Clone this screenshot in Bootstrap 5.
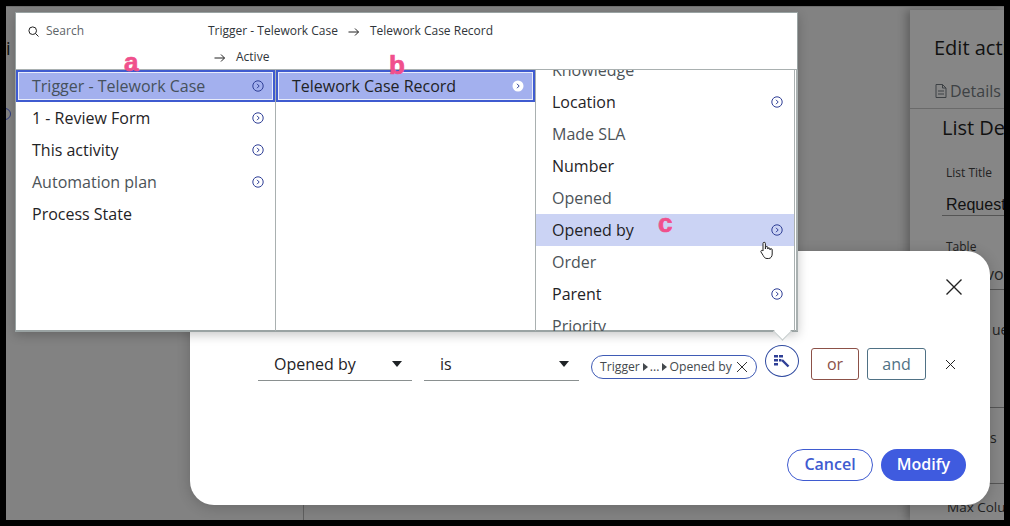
<!DOCTYPE html>
<html lang="en">
<head>
    <meta charset="UTF-8">
    <meta name="viewport" content="width=device-width, initial-scale=1.0">
    <title>Condition builder</title>
    <link href="https://cdn.jsdelivr.net/npm/bootstrap@5.3.3/dist/css/bootstrap.min.css" rel="stylesheet">
    <style>
        html, body { height: 100%; background: #000; overflow: hidden; }
        body { font-family: "Open Sans", sans-serif; color: #1f2326; }

        /* dimmed app behind the dialogs */
        .stage { position: absolute; left: 6px; top: 6px; width: 998px; height: 514px; background: #828282; overflow: hidden; border-top: 1px solid #6e6e6e; }
        .stage-rule { position: absolute; left: 297px; top: 498px; height: 16px; border-left: 1px solid #5f5f5f; }
        .side-panel { position: absolute; left: 904px; top: 3px; width: 94px; height: 511px; background: #868686; box-shadow: -4px 0 8px rgba(0,0,0,.25); color: #111; white-space: nowrap; overflow: hidden; }
        .side-panel > * { position: absolute; }
        .edit-title { left: 24px; top: 24px; font-size: 20px; line-height: 28px; }
        .details-tab { left: 25px; top: 70px; font-size: 16px; line-height: 22px; color: #3d4144; display: flex; align-items: center; gap: 3px; }
        .tab-line { left: 0; right: 0; top: 98px; border-top: 1px solid #6a6a6a; }
        .list-head { left: 32px; top: 104px; font-size: 20px; line-height: 28px; }
        .field-label { left: 36px; font-size: 12px; line-height: 16px; color: #222; }
        .field-value { left: 36px; font-family: "Liberation Sans", sans-serif; font-size: 16px; line-height: 20px; }
        .field-text { font-size: 14px; line-height: 18px; color: #222; }
        .field-line { left: 32px; right: 0; border-top: 1px solid #555; }
        .stray-letter { position: absolute; left: 0; top: 32px; font-size: 18px; color: #111; line-height: 1; }
        .stray-dot { position: absolute; left: -7px; top: 101px; width: 12px; height: 12px; border: 1px solid #2b3a80; border-radius: 50%; }

        /* condition modal */
        .cond-modal { position: absolute; left: 190px; top: 251px; width: 800px; height: 254px; background: #fff; border-radius: 24px; box-shadow: 0 2px 14px rgba(0,0,0,.2); }
        .modal-close { position: absolute; left: 755px; top: 27px; }
        .cond-row { position: absolute; left: 68px; top: 97px; }
        .pick-box { width: 154px; height: 33px; border-bottom: 1px solid #8a9090; padding: 0 10px 0 16px; font-size: 16px; }
        .pick-box.second { width: 155px; margin-left: 12px; }
        .pick-caret { width: 0; height: 0; border-left: 5.5px solid transparent; border-right: 5.5px solid transparent; border-top: 6px solid #1f2326; }
        .chip { width: 166px; height: 24px; border: 1px solid #3f5bb5; border-radius: 12px; font-size: 12.2px; padding: 0 6px 0 8px; color: #44494d; white-space: nowrap; margin: 7px 0 0 12px; }
        .chip-arrow { width: 0; height: 0; border-top: 4.5px solid transparent; border-bottom: 4.5px solid transparent; border-left: 5px solid #44494d; margin: 0 2px 0 3px; }
        .pick-btn { width: 34px; height: 32px; border: 1px solid #2f4aa0; border-radius: 50%; background: #fff; margin: -3px 0 0 8px; }
        .logic-btn { height: 32px; border-radius: 3px; background: #fff; font-size: 16px; display: flex; align-items: center; justify-content: center; }
        .logic-or { width: 48px; border: 1px solid #8c5148; color: #8c5148; margin-left: 12px; }
        .logic-and { width: 59px; border: 1px solid #4f7185; color: #4f7185; margin-left: 8px; }
        .row-close { margin: 11px 0 0 19px; }
        .cond-actions { position: absolute; right: 24px; bottom: 24px; }
        .pill-btn { height: 32px; border-radius: 16px; font-size: 16px; font-weight: 600; padding: 0 0 2px; }
        .cancel-pill { width: 86px; border: 1px solid #3f5bd0; color: #3f5bd0; background: #fff; }
        .modify-pill { width: 85px; border: 0; color: #fff; background: #3f5bdf; margin-left: 8px; }

        /* field picker popover */
        .picker { position: absolute; left: 15px; top: 12px; width: 783px; height: 320px; background: #fff; border: 1px solid #9aa3a3; border-bottom-width: 2px; box-shadow: 0 3px 10px rgba(0,0,0,.22); }
        .picker-top { height: 57px; border-bottom: 1px solid #a9b0b0; font-size: 12px; position: relative; }
        .search-hint { position: absolute; left: 12px; top: 9px; color: #5e6468; display: flex; align-items: center; gap: 7px; }
        .crumbs { position: absolute; left: 192px; top: 5px; width: 320px; line-height: 26px; color: #30353a; }
        .crumbs svg { margin: 0 10px 0 10px; }
        .crumb-next { display: block; margin-left: -4px; }
        .picker-cols { height: 261px; }
        .picker-col { width: 260px; height: 261px; border-right: 1px solid #a9b0b0; overflow: hidden; position: relative; flex: none; }
        .picker-col.narrow { width: 259px; }
        .picker-edge { width: 2px; border-right: 2px solid #a9b0b0; flex: none; margin-left: 1px; }
        .picker-item { height: 32px; padding: 0 11px 0 16px; font-size: 16px; color: #1f2326; }
        .picker-item.muted { color: #4c5358; }
        .picker-item.on { background: #a3b0ee; color: #46515c; border: 2px solid #3f5bd0; box-shadow: inset 0 0 0 1px #e8ecfa; padding-left: 14px; padding-right: 9px; }
        .picker-item.on.bright { color: #1f2326; }
        .picker-item.hover { background: #cbd3f4; }
        .scrolled { margin-top: -16px; }
        .tag-letter { position: absolute; font-family: "Liberation Sans", sans-serif; font-weight: 700; color: #f0508c; -webkit-text-stroke: .7px #f0508c; font-size: 26px; line-height: 1; }
        .hand { position: absolute; left: 759px; top: 241px; }
        .picker-tail { position: absolute; left: 776px; top: 325px; width: 13px; height: 13px; background: #fff; transform: rotate(45deg); border-right: 1px solid #c4caca; border-bottom: 1px solid #c4caca; z-index: 1; }
    </style>
</head>
<body>
    <svg width="0" height="0" class="position-absolute">
        <symbol id="go" viewBox="0 0 12 12">
            <circle cx="6" cy="6" r="5.2" fill="none" stroke="#2f3f96" stroke-width="1"/>
            <path d="M5 3.8 7.2 6 5 8.2" fill="none" stroke="#2f3f96" stroke-width="1"/>
        </symbol>
        <symbol id="arr" viewBox="0 0 12 10">
            <path d="M.5 5h10M7 1.500 10.500 5 7 8.500" fill="none" stroke="#222" stroke-width="1"/>
        </symbol>
    </svg>

    <div class="stage">
        <span class="stray-letter">i</span>
        <span class="stray-dot"></span>
        <span class="stage-rule"></span>
        <div class="side-panel">
            <div class="edit-title">Edit activity</div>
            <div class="details-tab">
                <svg width="12" height="14" viewBox="0 0 12 14"><path d="M1 .5h6.500L11 4v9.500H1zM7.500.5V4H11M3 7h6M3 10h6" fill="none" stroke="#3d4144"/></svg>
                Details
            </div>
            <div class="tab-line"></div>
            <div class="list-head">List Details</div>
            <div class="field-label" style="top:155px">List Title</div>
            <div class="field-value" style="top:185px">Requests</div>
            <div class="field-line" style="top:205px"></div>
            <div class="field-label" style="top:229px">Table</div>
            <div class="field-text" style="left:76px;top:255px;font-size:16px">vo</div>
            <div class="field-line" style="top:279px"></div>
            <div class="field-text" style="left:82px;top:311px">uer</div>
            <div class="field-line" style="top:397px"></div>
            <div class="field-text" style="left:80px;top:419px">s</div>
            <div class="field-line" style="top:473px"></div>
            <div class="field-text" style="left:37px;top:488px;font-size:13.5px">Max Colum</div>
        </div>
    </div>

    <div class="cond-modal">
        <svg class="modal-close" width="18" height="18" viewBox="0 0 18 18"><path d="M1.500 1.500l15 15M16.500 1.500l-15 15" stroke="#222" stroke-width="1.400" fill="none"/></svg>
        <div class="cond-row d-flex align-items-start">
            <div class="pick-box d-flex align-items-center justify-content-between">Opened by <span class="pick-caret"></span></div>
            <div class="pick-box second d-flex align-items-center justify-content-between">is <span class="pick-caret"></span></div>
            <div class="chip d-flex align-items-center">Trigger<span class="chip-arrow"></span>...<span class="chip-arrow"></span>Opened by
                <svg class="ms-1" width="12" height="12" viewBox="0 0 12 12"><path d="M1 1l10 10M11 1l-10 10" stroke="#333" fill="none"/></svg>
            </div>
            <button class="pick-btn d-flex align-items-center justify-content-center p-0" type="button" aria-label="Pick field">
                <svg width="16" height="14" viewBox="0 0 16 14"><path d="M0 1h4v2.500H0zM0 5h4v2.500H0zM0 9h4v2.500H0zM5 1h4v2.500H5zM5 5h2.500v2.500H5z" fill="#2f3f96"/><path d="M8 6l6.500 6.500" stroke="#2f3f96" stroke-width="2.400" fill="none"/></svg>
            </button>
            <div class="logic-btn logic-or">or</div>
            <div class="logic-btn logic-and">and</div>
            <svg class="row-close" width="11" height="11" viewBox="0 0 11 11"><path d="M1 1l9 9M10 1l-9 9" stroke="#222" fill="none"/></svg>
        </div>
        <div class="cond-actions d-flex">
            <button class="pill-btn cancel-pill" type="button">Cancel</button>
            <button class="pill-btn modify-pill" type="button">Modify</button>
        </div>
    </div>

    <div class="picker-tail"></div>
    <div class="picker">
        <div class="picker-top">
            <div class="search-hint">
                <svg width="11" height="11" viewBox="0 0 11 11"><circle cx="4.700" cy="4.700" r="3.800" fill="none" stroke="#222"/><path d="M7.500 7.500 10.500 10.500" stroke="#222"/></svg>
                Search
            </div>
            <div class="crumbs">Trigger - Telework Case<svg width="12" height="10"><use href="#arr"/></svg>Telework Case Record<span class="crumb-next"><svg width="12" height="10"><use href="#arr"/></svg>Active</span></div>
        </div>
        <div class="picker-cols d-flex">
            <div class="picker-col">
                <div class="picker-item on d-flex align-items-center justify-content-between">Trigger - Telework Case <svg width="12" height="12"><use href="#go"/></svg></div>
                <div class="picker-item d-flex align-items-center justify-content-between">1 - Review Form <svg width="12" height="12"><use href="#go"/></svg></div>
                <div class="picker-item d-flex align-items-center justify-content-between">This activity <svg width="12" height="12"><use href="#go"/></svg></div>
                <div class="picker-item muted d-flex align-items-center justify-content-between">Automation plan <svg width="12" height="12"><use href="#go"/></svg></div>
                <div class="picker-item d-flex align-items-center justify-content-between">Process State</div>
            </div>
            <div class="picker-col">
                <div class="picker-item on bright d-flex align-items-center justify-content-between">Telework Case Record
                    <svg width="12" height="12" viewBox="0 0 12 12"><circle cx="6" cy="6" r="5.500" fill="#fff"/><path d="M5 3.800 7.200 6 5 8.200" fill="none" stroke="#2f3f96"/></svg>
                </div>
            </div>
            <div class="picker-col narrow">
                <div class="scrolled">
                    <div class="picker-item muted d-flex align-items-center">Knowledge</div>
                    <div class="picker-item d-flex align-items-center justify-content-between">Location <svg width="12" height="12"><use href="#go"/></svg></div>
                    <div class="picker-item muted d-flex align-items-center">Made SLA</div>
                    <div class="picker-item d-flex align-items-center">Number</div>
                    <div class="picker-item muted d-flex align-items-center">Opened</div>
                    <div class="picker-item hover d-flex align-items-center justify-content-between">Opened by <svg width="12" height="12"><use href="#go"/></svg></div>
                    <div class="picker-item muted d-flex align-items-center">Order</div>
                    <div class="picker-item d-flex align-items-center justify-content-between">Parent <svg width="12" height="12"><use href="#go"/></svg></div>
                    <div class="picker-item muted d-flex align-items-center">Priority</div>
                </div>
            </div>
            <div class="picker-edge"></div>
        </div>
    </div>

    <span class="tag-letter" style="left:124px;top:49px">a</span>
    <span class="tag-letter" style="left:389px;top:52px">b</span>
    <span class="tag-letter" style="left:658px;top:210px">c</span>

    <svg class="hand" width="16" height="19" viewBox="0 0 16 19"><path d="M4 10V2.500a1.200 1.200 0 0 1 2.400 0V8l.2-1.500a1.100 1.100 0 0 1 2.200.2V8a1.100 1.100 0 0 1 2.200 0v.8a1.100 1.100 0 0 1 2.200 0V13c0 2.500-1.500 4.500-3.500 4.500H8c-1.800 0-2.800-1-3.800-3L2 11c-.7-1.300 1-2.300 2-1z" fill="#fff" stroke="#222"/></svg>

    <script src="https://cdn.jsdelivr.net/npm/bootstrap@5.3.3/dist/js/bootstrap.bundle.min.js"></script>
</body>
</html>
